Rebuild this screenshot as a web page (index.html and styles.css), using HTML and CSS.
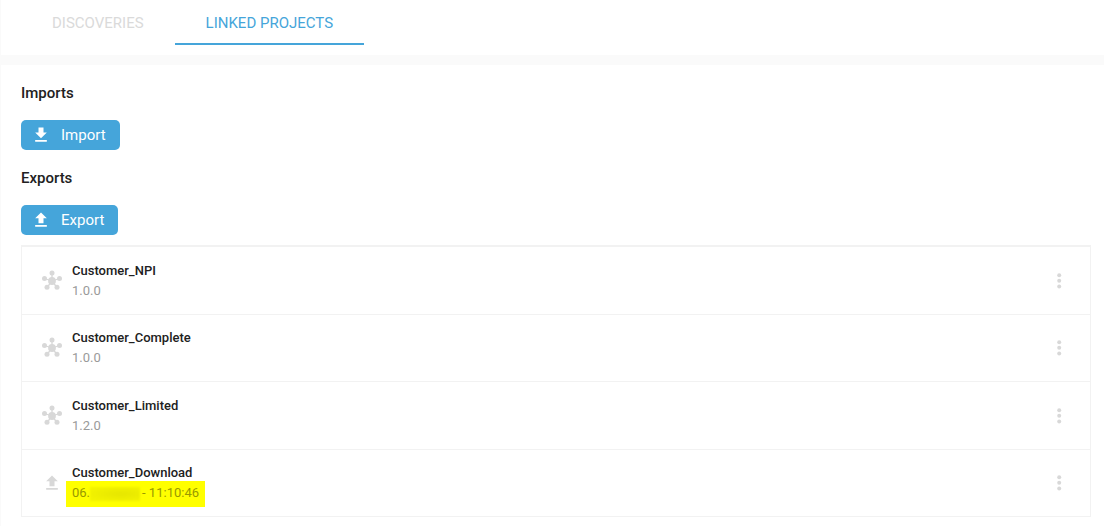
FILE: index.html
```html
<!DOCTYPE html>
<html lang="en">
<head>
<meta charset="utf-8">
<title>Linked Projects</title>
<link rel="stylesheet" href="styles.css">
</head>
<body>
<svg class="sprite" aria-hidden="true">
  <symbol id="download" viewBox="0 0 24 24"><path d="M19 9h-4V3H9v6H5l7 7 7-7zM5 18v2h14v-2H5z"/></symbol>
  <symbol id="upload" viewBox="0 0 24 24"><path d="M9 16h6v-6h4l-7-7-7 7h4v6zM5 18v2h14v-2H5z"/></symbol>
  <symbol id="hub" viewBox="0 0 22 22">
    <path d="M11 11V3M11 11L3.500 8.500M11 11l7.500-2.500M11 11l-5 6.500M11 11l5 6.500" stroke="currentColor" stroke-width="1.300"/>
    <circle cx="11" cy="11" r="3.900"/><circle cx="11" cy="2.900" r="2.500"/><circle cx="3.500" cy="8.400" r="2.500"/><circle cx="18.500" cy="8.400" r="2.500"/><circle cx="6" cy="17.200" r="2.500"/><circle cx="16" cy="17.200" r="2.500"/>
  </symbol>
  <symbol id="more" viewBox="0 0 22 22"><circle cx="11.200" cy="5.200" r="2"/><circle cx="11.200" cy="10.800" r="2"/><circle cx="11.200" cy="16.400" r="2"/></symbol>
</svg>
<nav class="tabs">
  <a class="tab" href="#discoveries">DISCOVERIES</a>
  <a class="tab tab-active" href="#linked" aria-current="page">LINKED PROJECTS</a>
</nav>
<main class="panel">
  <section class="section">
    <h2 class="heading">Imports</h2>
    <button class="button" type="button"><svg class="button-icon"><use href="#download"/></svg>Import</button>
  </section>
  <section class="section">
    <h2 class="heading">Exports</h2>
    <button class="button" type="button"><svg class="button-icon"><use href="#upload"/></svg>Export</button>
    <ul class="list">
      <li class="row">
        <svg class="row-icon"><use href="#hub"/></svg>
        <div class="info"><div class="name">Customer_NPI</div><div class="detail">1.0.0</div></div>
        <button class="more" type="button" aria-label="More"><svg class="more-icon"><use href="#more"/></svg></button>
      </li>
      <li class="row">
        <svg class="row-icon"><use href="#hub"/></svg>
        <div class="info"><div class="name">Customer_Complete</div><div class="detail">1.0.0</div></div>
        <button class="more" type="button" aria-label="More"><svg class="more-icon"><use href="#more"/></svg></button>
      </li>
      <li class="row">
        <svg class="row-icon"><use href="#hub"/></svg>
        <div class="info"><div class="name">Customer_Limited</div><div class="detail">1.2.0</div></div>
        <button class="more" type="button" aria-label="More"><svg class="more-icon"><use href="#more"/></svg></button>
      </li>
      <li class="row">
        <svg class="row-icon row-icon-small"><use href="#upload"/></svg>
        <div class="info"><div class="name">Customer_Download</div><div class="detail marked">06.<span class="redacted"></span>- 11:10:46</div></div>
        <button class="more" type="button" aria-label="More"><svg class="more-icon"><use href="#more"/></svg></button>
      </li>
    </ul>
  </section>
</main>
</body>
</html>
```
FILE: styles.css
```css
* { box-sizing: border-box; }
body {
  margin: 0;
  padding-left: 1px;
  background: #fafafa;
  color: #212121;
  font-family: Roboto, "Liberation Sans", sans-serif;
  font-size: 15px;
}
svg { fill: currentColor; display: block; flex: none; }
.sprite { display: none; }
.tabs {
  display: flex;
  padding: 0 20px 10px;
  background: #fff;
}
.tab {
  padding: 4px 31px 0;
  line-height: 39px;
  color: #dadada;
  text-decoration: none;
  border-bottom: 2px solid transparent;
}
.tab-active {
  color: #45a5da;
  border-bottom-color: #45a5da;
}
.panel {
  margin-top: 10px;
  padding: 18px 13px 8px 20px;
  background: #fff;
  min-height: calc(100vh - 65px);
}
.section + .section { margin-top: 18px; }
.heading {
  margin: 0 0 17px;
  font-size: 15px;
  font-weight: 500;
  line-height: 20px;
}
.button {
  display: flex;
  align-items: center;
  gap: 10px;
  height: 30px;
  padding: 0 14px 0 10px;
  border: 0;
  border-radius: 5px;
  background: #45a5da;
  color: #fff;
  font: inherit;
}
.button-icon { width: 20px; height: 20px; }
.list {
  margin: 10px 0 0;
  padding: 0;
  list-style: none;
  border: 1px solid #f2f2f2;
  border-top-width: 2px;
  border-bottom: 0;
}
.row {
  display: flex;
  align-items: center;
  padding: 14px 20px 13px 19px;
  border-bottom: 1px solid #f2f2f2;
  font-size: 13px;
  line-height: 20px;
}
.row:nth-child(even) { padding-top: 13px; }
.row-icon { width: 22px; height: 22px; color: #d8d8d8; }
.row-icon-small { width: 20px; height: 20px; margin: 0 1px; }
.info { flex: 1; margin-left: 9px; }
.name { font-weight: 500; }
.detail { color: #9a9a9a; }
.marked {
  width: max-content;
  margin: -2px 0 -4px -6px;
  padding: 2px 6px 4px;
  background: #ff0;
  color: #999900;
}
.redacted {
  display: inline-block;
  width: 50px;
  height: 14px;
  margin-right: 2px;
  vertical-align: middle;
  background: radial-gradient(ellipse at 62% 50%, #e6e600, #f2f200 75%);
  filter: blur(1px);
}
.more {
  padding: 0;
  border: 0;
  background: none;
  color: #d8d8d8;
}
.more-icon { width: 22px; height: 22px; }
```
